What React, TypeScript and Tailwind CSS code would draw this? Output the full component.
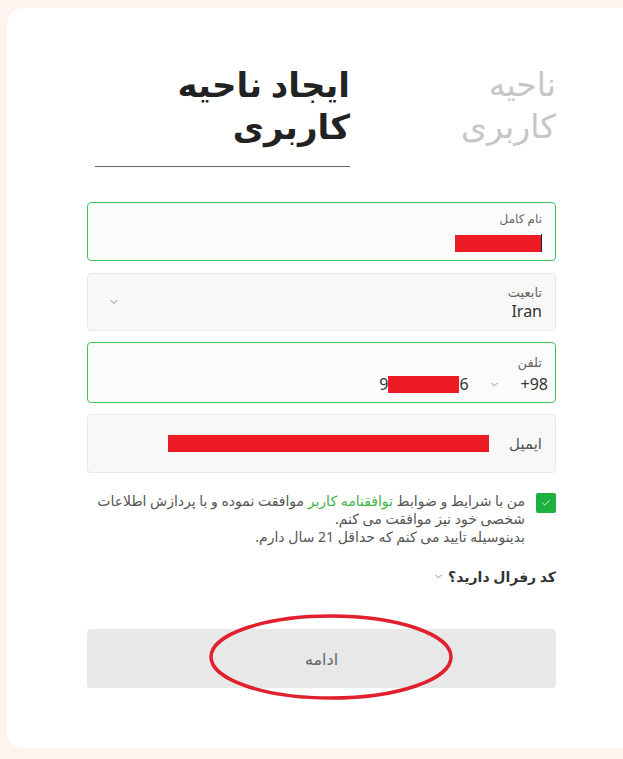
import { ChevronDown, Check } from "lucide-react";

const font = { fontFamily: '"Noto Sans", "DejaVu Sans", sans-serif' };

function Redact({ className }: { className: string }) {
  return <div className={`bg-[#ed1c24] ${className}`} />;
}

export default function App() {
  return (
    <div className="w-[623px] h-[759px] overflow-hidden bg-[#fdf4f0] pt-[8px] pl-[7px]" style={font}>
      <div className="relative w-[629px] h-[740px] rounded-2xl bg-white">
        <div dir="rtl" className="absolute left-[80px] top-0 w-[469px]">
          {/* Tabs */}
          <div className="flex pt-[55px]">
            <div className="w-[206px] text-right text-[33px] leading-[42px] text-[#c6c6c6]">
              ناحیه
              <br />
              کاربری
            </div>
            <div className="w-[255px] border-b border-[#666] pb-[19px] text-right text-[34px] font-bold leading-[42px] text-[#222]">
              ایجاد ناحیه
              <br />
              کاربری
            </div>
          </div>

          {/* Full name */}
          <div className="mt-[35px] h-[59px] rounded border border-[#3ec45c] bg-[#fbfbfb] pr-[13px] pt-[8px]">
            <div className="text-[12px] leading-[16px] text-[#666]">نام کامل</div>
            <div className="mt-[7px] flex items-center">
              <div className="h-[18px] w-px bg-[#222]" />
              <Redact className="h-[17px] w-[86px]" />
            </div>
          </div>

          {/* Nationality */}
          <div className="mt-[12px] flex h-[58px] items-center justify-between rounded border border-[#e8e8e8] bg-[#f8f8f8] pl-[20px] pr-[13px]">
            <div className="pt-[2px]">
              <div className="text-[13px] leading-[16px] text-[#666]">تابعیت</div>
              <div className="text-[16px] leading-[22px] text-[#333]">Iran</div>
            </div>
            <ChevronDown className="h-[12px] w-[12px] text-[#666]" strokeWidth={1.5} />
          </div>

          {/* Phone */}
          <div className="mt-[11px] h-[61px] rounded border border-[#3ec45c] bg-[#fbfbfb] pr-[7px] pt-[11px]">
            <div className="pr-[6px] text-[13px] leading-[16px] text-[#666]">تلفن</div>
            <div className="mt-[3px] flex items-center">
              <span dir="ltr" className="text-[16px] leading-[22px] text-[#333]">+98</span>
              <ChevronDown className="mr-[21px] h-[11px] w-[11px] text-[#666]" strokeWidth={1.5} />
              <div dir="ltr" className="mr-[20px] flex items-center text-[16px] leading-[22px] text-[#333]">
                <span>9</span>
                <Redact className="h-[17px] w-[71px]" />
                <span>6</span>
              </div>
            </div>
          </div>

          {/* Email */}
          <div className="mt-[11px] flex h-[59px] items-center rounded border border-[#e8e8e8] bg-[#f8f8f8] pr-[13px]">
            <span className="text-[15px] text-[#555]">ایمیل</span>
            <Redact className="mr-[20px] h-[17px] w-[321px]" />
          </div>

          {/* Terms */}
          <div className="mt-[20px] flex gap-[11px]">
            <div className="flex h-[20px] w-[20px] shrink-0 items-center justify-center rounded-[2px] bg-[#1db140]">
              <Check className="h-[10px] w-[10px] text-white" strokeWidth={2} />
            </div>
            <p className="-mt-[1px] text-[14px] leading-[18px] text-[#555]">
              من با شرایط و ضوابط <span className="text-[#3cb54a]">توافقنامه کاربر</span> موافقت نموده و با
              پردازش اطلاعات شخصی خود نیز موافقت می کنم.
              <br />
              بدینوسیله تایید می کنم که حداقل 21 سال دارم.
            </p>
          </div>

          {/* Referral */}
          <div className="mt-[20px] flex items-center gap-[4px] text-[14px] font-bold text-[#333]">
            <span>کد رفرال دارید؟</span>
            <ChevronDown className="h-[11px] w-[11px] text-[#666]" strokeWidth={1.5} />
          </div>

          {/* Continue */}
          <button className="mt-[42px] flex h-[59px] w-full items-center justify-center rounded bg-[#e8e8e8] text-[16px] text-[#666]">
            ادامه
          </button>
        </div>

        {/* red annotation ellipse */}
        <svg className="pointer-events-none absolute left-[192px] top-[597px]" width="264" height="104" viewBox="0 0 264 104">
          <ellipse cx="132" cy="52" rx="120" ry="41" fill="none" stroke="#e0202c" strokeWidth="3.5" />
        </svg>
      </div>
    </div>
  );
}
